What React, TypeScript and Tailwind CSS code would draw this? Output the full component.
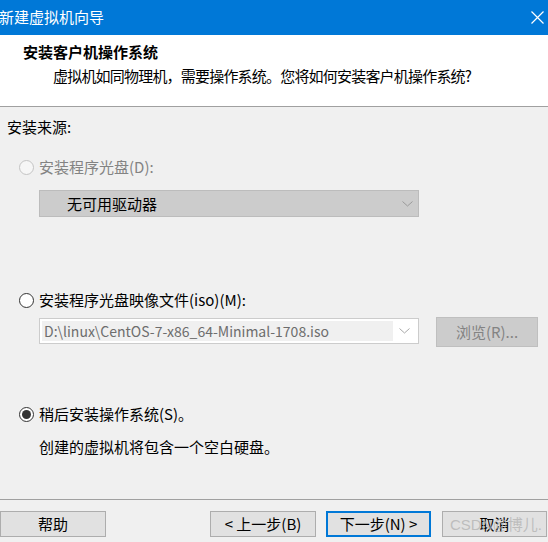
import React from "react";

const font = { fontFamily: '"Noto Sans CJK SC", "Noto Sans", sans-serif' };

function Radio({ state }: { state: "disabled" | "off" | "on" }) {
  if (state === "disabled") {
    return <div className="w-[15px] h-[15px] rounded-full border border-[#c4c4c4] bg-[#f6f6f6] shrink-0" />;
  }
  return (
    <div className="w-[15px] h-[15px] rounded-full border border-[#333333] bg-white shrink-0 flex items-center justify-center">
      {state === "on" && <div className="w-[9px] h-[9px] rounded-full bg-[#333333]" />}
    </div>
  );
}

function Chevron({ color }: { color: string }) {
  return (
    <svg width="11" height="6" viewBox="0 0 11 6">
      <path d="M0.5 0.5 L5.5 5 L10.5 0.5" fill="none" stroke={color} strokeWidth="1" />
    </svg>
  );
}

export default function App() {
  return (
    <div className="w-[548px] h-[542px] bg-[#f0f0f0] flex flex-col overflow-hidden text-[15px] leading-[20px] text-black" style={font}>
      {/* title bar */}
      <div className="h-[35px] bg-[#0078d7] flex items-center justify-between shrink-0">
        <span className="text-white -ml-[1px] -mt-[2px] text-[15px]">新建虚拟机向导</span>
        <svg width="13" height="13" viewBox="0 0 13 13" className="mr-[4px]">
          <path d="M0.5 0.5 L12.5 12.5 M12.5 0.5 L0.5 12.5" stroke="white" strokeWidth="1.2" />
        </svg>
      </div>
      {/* header */}
      <div className="h-[72px] bg-white border-b border-[#a0a0a0] shrink-0 flex flex-col">
        <div className="mt-[7px] pl-[23px] font-bold h-[20px]">安装客户机操作系统</div>
        <div className="mt-[4px] pl-[53px] h-[20px] tracking-[-0.8px]">虚拟机如同物理机，需要操作系统。您将如何安装客户机操作系统?</div>
      </div>
      {/* body */}
      <div className="flex flex-col">
        <div className="mt-[10px] pl-[7px] h-[20px]">安装来源:</div>

        <div className="mt-[20px] h-[20px] pl-[19px] flex items-center gap-[5px]">
          <Radio state="disabled" />
          <span className="text-[#838383]">安装程序光盘(D):</span>
        </div>
        <div className="mt-[13px] ml-[39px] w-[380px] h-[27px] bg-[#cccccc] border border-[#bcbcbc] flex items-center justify-between pl-[27px] pr-[5px]">
          <span>无可用驱动器</span>
          <Chevron color="#9a9a9a" />
        </div>

        <div className="mt-[73px] h-[20px] pl-[19px] flex items-center gap-[5px]">
          <Radio state="off" />
          <span>安装程序光盘映像文件(iso)(M):</span>
        </div>
        <div className="mt-[7px] flex items-start pl-[39px]">
          <div className="mt-[1px] w-[380px] h-[26px] bg-white border border-[#cccccc] flex items-stretch p-[2px]">
            <div className="flex-1 bg-[#f0f0f0] flex items-center pl-[2px] text-[#6d6d6d] text-[14px]">
              D:\linux\CentOS-7-x86_64-Minimal-1708.iso
            </div>
            <div className="w-[23px] flex items-center justify-center">
              <Chevron color="#a8a8a8" />
            </div>
          </div>
          <div className="ml-[17px] w-[102px] h-[30px] bg-[#cccccc] border border-[#bfbfbf] flex items-center justify-center text-[#838383]">
            浏览(R)...
          </div>
        </div>

        <div className="mt-[57px] h-[20px] pl-[19px] flex items-center gap-[5px]">
          <Radio state="on" />
          <span>稍后安装操作系统(S)。</span>
        </div>
        <div className="mt-[13px] h-[20px] pl-[39px]">创建的虚拟机将包含一个空白硬盘。</div>

        <div className="mt-[42px] h-[1px] bg-[#a0a0a0]" />

        <div className="mt-[11px] h-[26px] flex items-stretch">
          <div className="w-[106px] bg-[#e1e1e1] border border-[#adadad] flex items-center justify-center">帮助</div>
          <div className="ml-[104px] w-[106px] bg-[#e1e1e1] border border-[#adadad] flex items-center justify-center">&lt; 上一步(B)</div>
          <div className="ml-[10px] w-[105px] bg-[#e1e1e1] border-2 border-[#0078d7] flex items-center justify-center">下一步(N) &gt;</div>
          <div className="ml-[11px] w-[105px] bg-[#e1e1e1] border border-[#adadad] flex items-center justify-center relative">
            <span>取消</span>
            <span className="absolute left-[7px] top-[3px] text-[#b4b4b4]/80 text-[15px]" style={{ fontFamily: '"Liberation Sans", "Noto Sans CJK SC", sans-serif' }}>CSDN@博儿.</span>
          </div>
        </div>
      </div>
    </div>
  );
}
